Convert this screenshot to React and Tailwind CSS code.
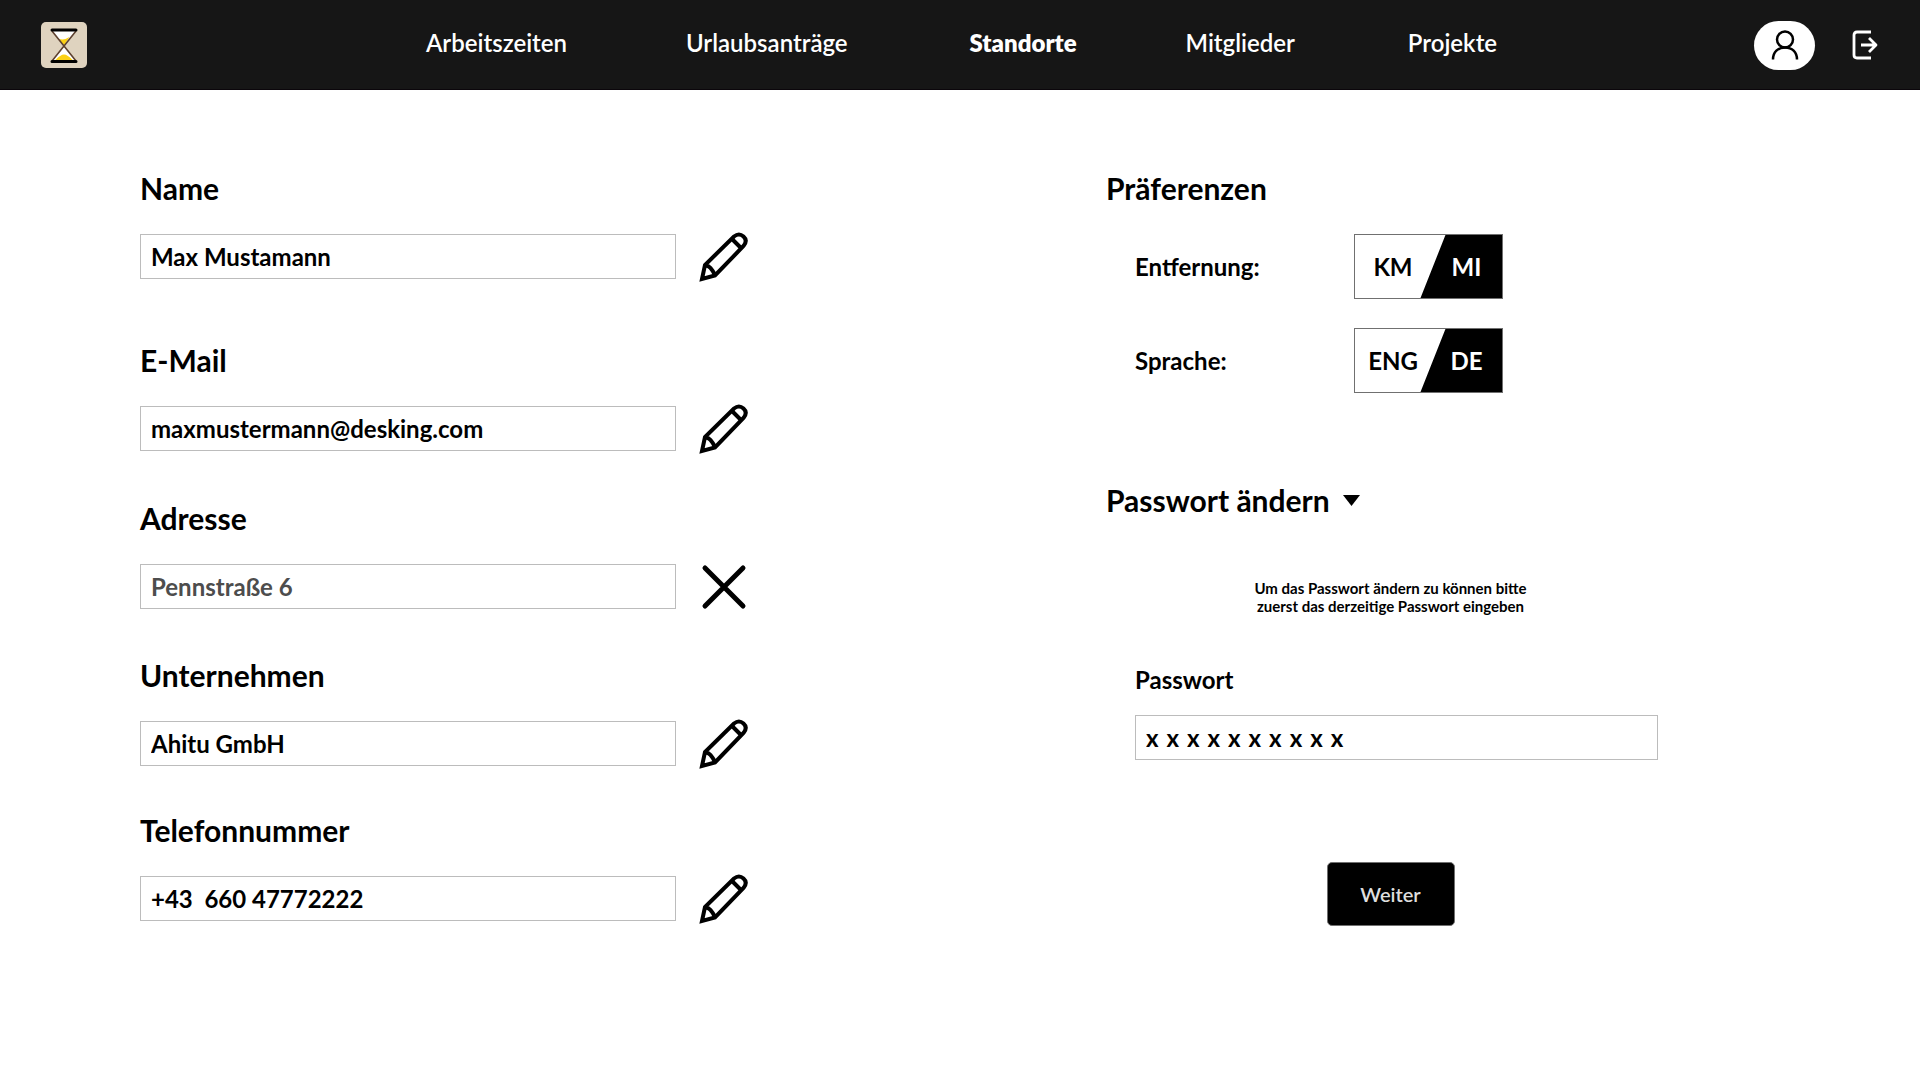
import { useState } from "react";

const NAV_ITEMS = [
  { label: "Arbeitszeiten", spacing: "mr-[119px]" },
  { label: "Urlaubsanträge", spacing: "mr-[122px]" },
  { label: "Standorte", spacing: "mr-[109px]", active: true },
  { label: "Mitglieder", spacing: "mr-[113px]" },
  { label: "Projekte", spacing: "" },
];

const FIELDS = [
  { id: "name", label: "Name", value: "Max Mustamann", spacing: "mb-[61px]" },
  { id: "email", label: "E-Mail", value: "maxmustermann@desking.com", spacing: "mb-[47px]" },
  { id: "address", label: "Adresse", value: "Pennstraße 6", editing: true, spacing: "mb-[46px]" },
  { id: "company", label: "Unternehmen", value: "Ahitu GmbH", spacing: "mb-11" },
  { id: "phone", label: "Telefonnummer", value: "+43  660 47772222", spacing: "" },
];

// Ten masked characters, set apart with third-em spaces.
const MASKED_PASSWORD = Array(10).fill("x").join("\u2004");

function HourglassLogo() {
  return (
    <svg viewBox="0 0 46 46" className="h-[46px] w-[46px]" aria-hidden="true">
      <rect width="46" height="46" rx="5" fill="#dfd3bf" />
      <path d="M11 9h24L23 24.500zM23 24.500l12 15H11z" fill="#fff" />
      <path d="M18 17l3.500.5 3-.5 4-2-5.500 8.500zM14.500 38q5-5.500 8.500-5.500t8.500 5.500z" fill="#fcd116" />
      <path d="M11 9l24 30M35 9L11 39" stroke="#5e4130" strokeWidth="1.600" />
      <path d="M11 8h24M11 39.500h24" stroke="#000" strokeWidth="3" strokeLinecap="round" />
    </svg>
  );
}

function UserIcon() {
  return (
    <svg viewBox="0 0 28 30" className="h-[30px] w-7" fill="none" stroke="#000" strokeWidth="2.500" aria-hidden="true">
      <circle cx="14" cy="9.500" r="8" />
      <path d="M2 29.500C2 22 7 17.500 14 17.500S26 22 26 29.500" />
    </svg>
  );
}

function LogoutIcon() {
  return (
    <svg viewBox="0 0 26 30" className="h-[30px] w-[26px]" fill="none" stroke="#fff" strokeWidth="2.800" strokeLinejoin="round" aria-hidden="true">
      <path d="M19 2H5Q2 2 2 5v20q0 3 3 3h14" />
      <path d="M9 15h15M17 8l7 7-7 7" />
    </svg>
  );
}

function PencilIcon() {
  return (
    <svg viewBox="0 0 50 50" className="h-[50px] w-[50px]" fill="none" stroke="#000" strokeWidth="4" aria-hidden="true">
      <path d="M3 47l3-14L35 4.500q5-4 9.500 0t0 9.500L16 43.500z" />
      <path d="M33 7l10 10M6 34q3-1 5.500 2t4 6" />
    </svg>
  );
}

function CrossIcon() {
  return (
    <svg viewBox="0 0 50 50" className="h-[50px] w-[50px]" fill="none" stroke="#000" strokeWidth="5" strokeLinecap="round" aria-hidden="true">
      <path d="M6 6l38 38M44 6L6 44" />
    </svg>
  );
}

function Field({ field }) {
  const tone = field.editing ? "text-[#4d4d4d]" : "text-black";
  return (
    <div className={field.spacing}>
      <label htmlFor={field.id} className="block text-[30px] leading-10 font-bold">
        {field.label}
      </label>
      <div className="mt-[26px] flex h-[45px] items-center gap-[23px]">
        <input
          id={field.id}
          defaultValue={field.value}
          className={`h-[45px] min-w-0 flex-1 border border-[#bcbcbc] px-2.5 text-2xl font-bold ${tone}`}
        />
        <button type="button" aria-label={`${field.label} bearbeiten`} className="shrink-0">
          {field.editing ? <CrossIcon /> : <PencilIcon />}
        </button>
      </div>
    </div>
  );
}

function Toggle({ label, left, right }) {
  const [on, setOn] = useState(true);
  return (
    <div className="flex h-[65px] items-center">
      <span className="w-[219px] text-2xl font-bold">{label}</span>
      <button
        type="button"
        role="switch"
        aria-checked={on}
        aria-label={label}
        onClick={() => setOn(!on)}
        className="grid h-[65px] w-[149px] grid-cols-[76px_1fr] items-center border border-[#707070] bg-[linear-gradient(111.6deg,#fff_52.3%,#000_52.9%)] text-center text-2xl font-bold"
      >
        <span>{left}</span>
        <span className="text-white">{right}</span>
      </button>
    </div>
  );
}

export default function App() {
  return (
    <div className="min-h-screen bg-white font-['Lato',sans-serif] text-black">
      <header className="grid h-[90px] grid-cols-[1fr_auto_1fr] items-center bg-[#161616] pr-[42px] pl-[41px] shadow-[inset_0_-1px_0_#0b060b]">
        <a href="#" aria-label="Startseite" className="justify-self-start">
          <HourglassLogo />
        </a>
        <nav className="flex pb-1 pl-1 text-2xl text-white">
          {NAV_ITEMS.map((item) => (
            <a key={item.label} href="#" className={`${item.spacing} ${item.active ? "font-extrabold" : "font-semibold"}`}>
              {item.label}
            </a>
          ))}
        </nav>
        <div className="flex items-center gap-[37px] justify-self-end">
          <button type="button" aria-label="Profil" className="flex h-[49px] w-[61px] items-center justify-center rounded-full bg-white">
            <UserIcon />
          </button>
          <button type="button" aria-label="Abmelden">
            <LogoutIcon />
          </button>
        </div>
      </header>

      <main className="grid grid-cols-[966fr_552fr] pt-[78px] pr-[262px] pb-20 pl-[140px]">
        <form className="w-[63%]">
          {FIELDS.map((field) => (
            <Field key={field.id} field={field} />
          ))}
        </form>

        <div>
          <section>
            <h2 className="text-[30px] leading-10 font-bold">Präferenzen</h2>
            <div className="mt-[26px] flex flex-col gap-[29px] pl-[29px]">
              <Toggle label="Entfernung:" left="KM" right="MI" />
              <Toggle label="Sprache:" left="ENG" right="DE" />
            </div>
          </section>

          <section className="mt-[87px]">
            <h2>
              <button type="button" aria-expanded="true" className="flex items-center gap-[13px] text-[30px] leading-10 font-bold">
                Passwort ändern
                <svg viewBox="0 0 17 11" className="h-[11px] w-[17px]" aria-hidden="true">
                  <path d="M0 0h17L8.500 11z" />
                </svg>
              </button>
            </h2>
            <form className="mt-[59px] flex flex-col pl-[29px]">
              <p className="pr-3 text-center text-[15px] leading-[18px] font-bold">
                Um das Passwort ändern zu können bitte
                <br />
                zuerst das derzeitige Passwort eingeben
              </p>
              <label htmlFor="password" className="mt-[49px] text-2xl font-bold">
                Passwort
              </label>
              <input
                id="password"
                defaultValue={MASKED_PASSWORD}
                className="mt-[19px] h-[45px] w-full border border-[#bcbcbc] px-2.5 text-2xl font-bold"
              />
              <button
                type="button"
                className="mt-[102px] mr-3 h-16 w-32 self-center rounded-[5px] border border-[#707070] bg-black text-xl font-semibold text-[#dedede]"
              >
                Weiter
              </button>
            </form>
          </section>
        </div>
      </main>
    </div>
  );
}
